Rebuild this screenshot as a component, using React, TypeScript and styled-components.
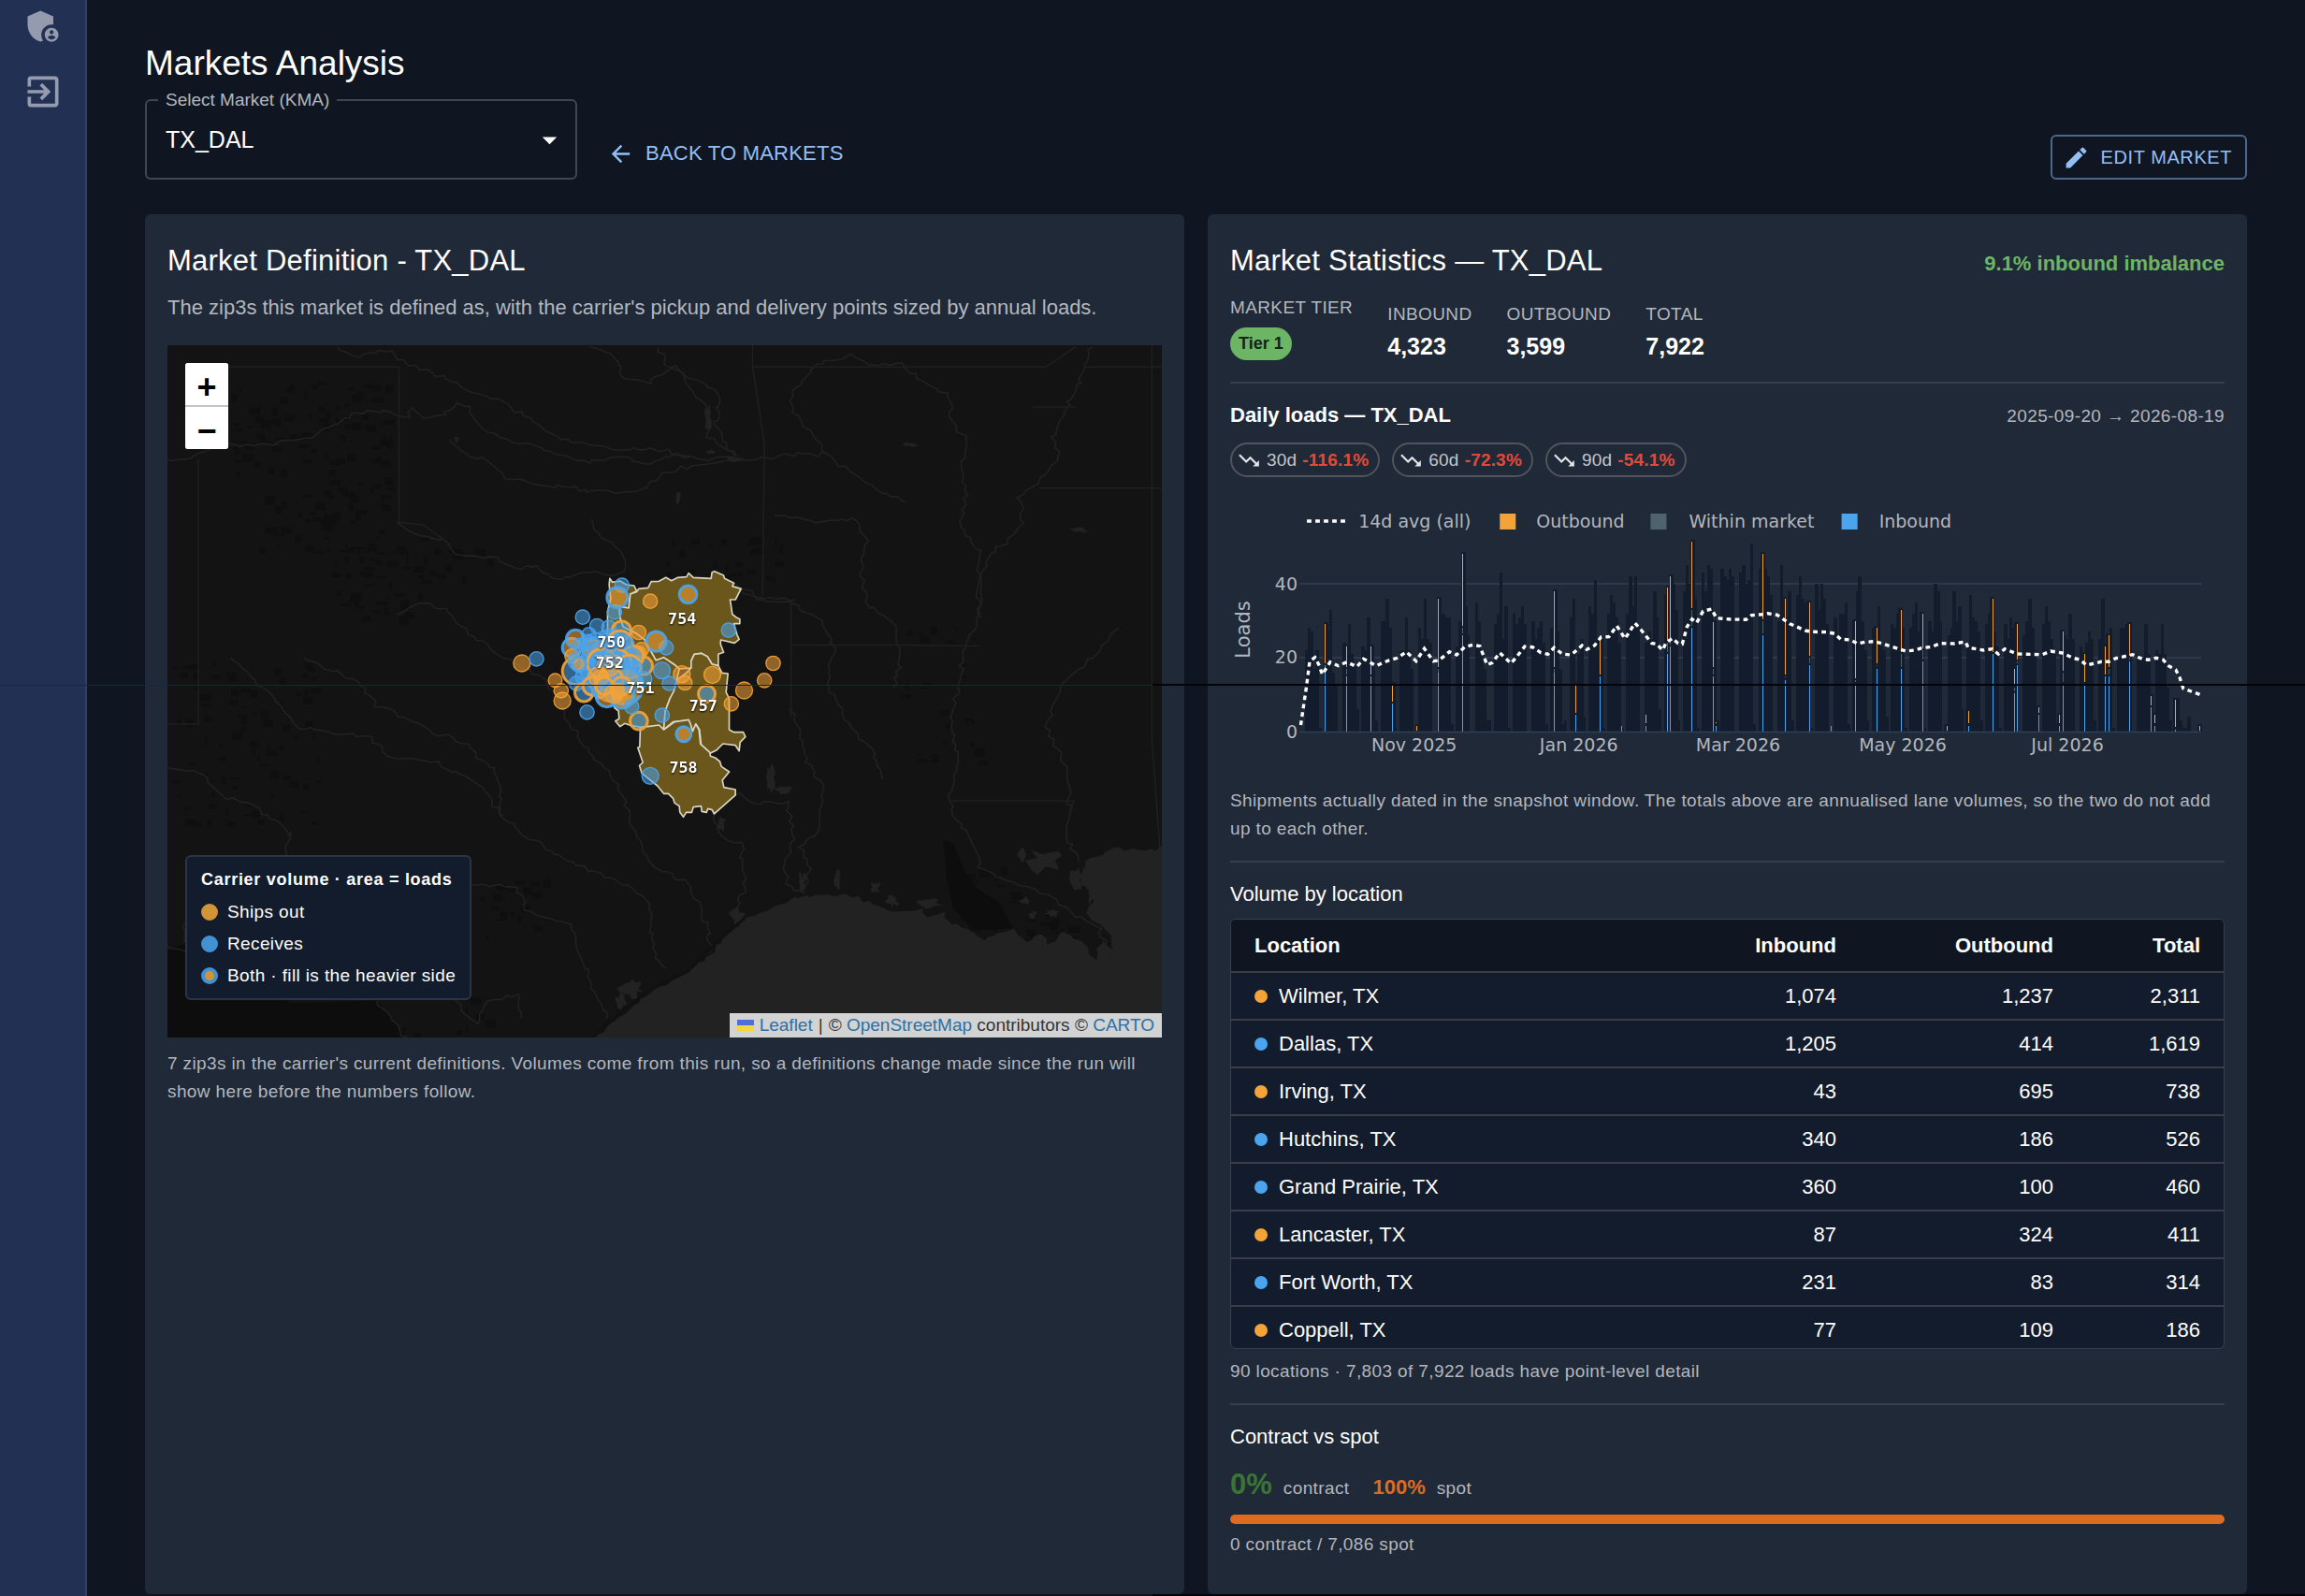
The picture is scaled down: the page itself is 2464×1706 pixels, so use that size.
import React from "react";
import styled, { createGlobalStyle, css } from "styled-components";
import {
  MdAdminPanelSettings,
  MdArrowBack,
  MdArrowDropDown,
  MdEdit,
  MdExitToApp,
  MdTrendingDown,
} from "react-icons/md";

const color = {
  page: "#0f1621",
  panel: "#1f2938",
  rail: "#223153",
  railEdge: "#33415f",
  tableHead: "#0f1621",
  tableBody: "#121c2d",
  text: "#ffffff",
  muted: "#b3b7be",
  line: "#35404f",
  rowLine: "#3b3e44",
  link: "#93bff5",
  orange: "#f4a338",
  blue: "#4aa4ee",
  slate: "#4f636f",
  green: "#6cb565",
  red: "#e04b39",
  contract: "#3a7535",
  spot: "#de6b20",
};

const GlobalStyle = createGlobalStyle`
  *, *::before, *::after { box-sizing: border-box; }
  body {
    margin: 0;
    background: ${color.page};
    color: ${color.text};
    font-family: "Liberation Sans", Helvetica, Arial, sans-serif;
    overflow: hidden;
  }
  h1, h2, h3, p { margin: 0; font-weight: 400; }
`;

/* ---------- type ---------- */

const captionType = css`
  font-size: 19px;
  line-height: 30px;
  letter-spacing: 0.02em;
`;

const Caption = styled.p<{ $gap?: number }>`
  ${captionType}
  color: ${color.muted};
  margin-top: ${(p) => p.$gap ?? 0}px;
`;

const PanelTitle = styled.h2`
  font-size: 31px;
  line-height: 49px;
  letter-spacing: 0.0075em;
`;

const SectionTitle = styled.h3<{ $bold?: boolean }>`
  font-size: 22px;
  line-height: 34px;
  font-weight: ${(p) => (p.$bold ? 700 : 400)};
`;

/* ---------- shell ---------- */

const Shell = styled.div`
  display: flex;
  height: 100vh;
  overflow: hidden;
`;

const Rail = styled.nav`
  flex: 0 0 93px;
  display: flex;
  flex-direction: column;
  align-items: center;
  gap: 26px;
  padding-top: 6px;
  background: ${color.rail};
  border-right: 2px solid ${color.railEdge};
`;

const RailButton = styled.button`
  display: flex;
  padding: 0;
  border: 0;
  background: none;
  color: #949bae;
  font-size: 44px;
`;

const Main = styled.main`
  flex: 1;
  min-width: 0;
  display: flex;
  flex-direction: column;
  padding: 44px 62px 2px;
`;

const PageTitle = styled.h1`
  font-size: 37px;
  line-height: 48px;
`;

const Toolbar = styled.div`
  display: flex;
  align-items: flex-end;
  gap: 24px;
`;

const Field = styled.fieldset`
  width: 462px;
  margin: 0;
  padding: 0;
  border: 2px solid #414751;
  border-radius: 6px;
`;

const FieldLegend = styled.legend`
  margin-left: 12px;
  padding: 0 8px;
  font-size: 19px;
  line-height: 30px;
  color: ${color.muted};
`;

const SelectWrap = styled.div`
  display: flex;
  align-items: center;
  height: 82px;
  margin-top: -14px;
`;

const MarketSelect = styled.select`
  appearance: none;
  flex: 1;
  height: 52px;
  padding: 0 20px;
  border: 0;
  background: none;
  color: ${color.text};
  font: inherit;
  font-size: 25px;
`;

const SelectArrow = styled(MdArrowDropDown)`
  flex: none;
  width: 37px;
  height: 37px;
  margin-left: -56px;
  margin-right: 9px;
  pointer-events: none;
`;

const TextButton = styled.button<{ $outlined?: boolean }>`
  display: flex;
  align-items: center;
  gap: 12px;
  height: ${(p) => (p.$outlined ? 48 : 56)}px;
  padding: ${(p) => (p.$outlined ? "0 14px 0 11px" : "0 8px")};
  margin-left: ${(p) => (p.$outlined ? "auto" : "0")};
  border: ${(p) => (p.$outlined ? "2px solid #49688e" : "0")};
  border-radius: 6px;
  background: none;
  color: ${color.link};
  font: inherit;
  font-size: ${(p) => (p.$outlined ? 20 : 22)}px;
  letter-spacing: ${(p) => (p.$outlined ? "0.02857em" : "0.01em")};
  text-transform: uppercase;

  svg {
    width: 29px;
    height: 29px;
  }
`;

const Panels = styled.div`
  flex: 1;
  min-height: 0;
  display: grid;
  grid-template-columns: minmax(0, 1fr) minmax(0, 1fr);
  gap: 25px;
  margin-top: 37px;
`;

const Panel = styled.section`
  padding: 25px 24px;
  background: ${color.panel};
  border-radius: 6px;
`;

/* ---------- map ---------- */

const Description = styled.p`
  margin-top: 10px;
  font-size: 22px;
  line-height: 31px;
  color: ${color.muted};
`;

const MapFrame = styled.div`
  position: relative;
  height: 740px;
  margin-top: 25px;
  overflow: hidden;
  background: #131313;
`;

const MapCanvas = styled.svg`
  display: block;
  width: 100%;
  height: 100%;
`;

const ZoomControl = styled.div`
  position: absolute;
  top: 19px;
  left: 19px;
  display: flex;
  flex-direction: column;
  gap: 2px;
  width: 46px;
  border-radius: 3px;
  overflow: hidden;
  background: #c4c4c4;
`;

const ZoomButton = styled.button`
  height: 45px;
  padding: 7px 0 0;
  border: 0;
  background: #ffffff;
  color: #000000;
  font-family: "Liberation Sans", Arial, sans-serif;
  font-size: 36px;
  font-weight: 700;
  line-height: 38px;
`;

const MapLegend = styled.div`
  position: absolute;
  left: 19px;
  bottom: 40px;
  padding: 6px 15px 7px;
  border: 2px solid #2b3546;
  border-radius: 6px;
  background: #121c2d;
  ${captionType}
`;

const LegendTitle = styled.div`
  font-size: 18px;
  letter-spacing: 0.04em;
  font-weight: 700;
  line-height: 36px;
`;

const LegendRow = styled.div`
  display: flex;
  align-items: center;
  gap: 10px;
  line-height: 34px;
`;

const LegendDot = styled.span<{ $fill: string; $ring?: string }>`
  width: 18px;
  height: 18px;
  border-radius: 50%;
  border: 4px solid ${(p) => p.$ring ?? p.$fill};
  background: ${(p) => p.$fill};
`;

const Attribution = styled.div`
  position: absolute;
  right: 0;
  bottom: 0;
  display: flex;
  align-items: center;
  gap: 6px;
  height: 26px;
  padding: 0 8px;
  background: #d3d3d3;
  color: #333333;
  font-size: 19px;
  line-height: 26px;
  white-space: nowrap;

  a {
    color: #2b71a6;
    text-decoration: none;
  }
`;

const Flag = styled.span`
  width: 18px;
  height: 12px;
  background: linear-gradient(#4c6fdc 50%, #f7d53c 50%);
`;

type Dot = [number, number, number, "o" | "b" | "ob" | "bo"];

const dots: Dot[] = [
  [115, 447, 28, "o"], [162, 433, 24, "b"], [222, 502, 23, "o"], [241, 535, 24, "o"],
  [245, 567, 28, "o"], [324, 604, 24, "b"], [310, 299, 24, "b"], [921, 447, 24, "o"],
  [893, 502, 24, "o"], [828, 534, 28, "o"], [787, 577, 24, "o"], [726, 484, 28, "o"],
  [628, 482, 28, "o"], [638, 510, 24, "o"], [708, 545, 30, "bo"], [564, 470, 28, "b"],
  [588, 512, 24, "b"], [565, 614, 24, "b"], [490, 632, 31, "bo"], [634, 674, 27, "ob"],
  [527, 808, 28, "b"], [778, 341, 24, "b"], [648, 226, 31, "ob"], [527, 248, 24, "o"],
  [436, 197, 24, "b"], [412, 283, 24, "b"], [421, 236, 36, "ob"], [578, 397, 24, "b"],
  [546, 377, 35, "ob"], [490, 348, 24, "o"], [356, 327, 24, "b"], [394, 332, 24, "b"],
  [435, 342, 33, "bo"], [330, 355, 24, "b"], [275, 397, 33, "ob"], [287, 369, 32, "ob"],
  [350, 385, 36, "b"], [395, 395, 48, "b"], [395, 378, 40, "b"], [340, 430, 36, "b"],
  [345, 400, 38, "ob"], [430, 382, 42, "bo"], [445, 390, 32, "b"], [499, 403, 24, "o"],
  [288, 472, 46, "bo"], [276, 424, 24, "o"], [302, 390, 24, "b"], [325, 378, 24, "b"],
  [345, 470, 44, "b"], [370, 420, 46, "b"], [505, 455, 32, "bo"], [490, 415, 24, "o"],
  [472, 425, 36, "bo"], [508, 497, 25, "b"], [430, 430, 54, "b"], [420, 450, 50, "bo"],
  [372, 448, 50, "bo"], [460, 458, 40, "bo"], [478, 462, 24, "b"], [312, 490, 26, "b"],
  [290, 512, 24, "b"], [314, 541, 32, "bo"], [340, 520, 32, "bo"], [365, 535, 26, "ob"],
  [400, 520, 52, "o"], [445, 520, 62, "ob"], [450, 500, 46, "b"], [388, 552, 38, "ob"],
  [436, 552, 42, "ob"], [400, 500, 42, "bo"], [360, 490, 32, "o"], [369, 492, 26, "o"],
  [380, 520, 30, "bo"], [435, 520, 32, "bo"], [410, 545, 30, "o"], [421, 534, 24, "o"],
  [395, 455, 34, "o"], [400, 430, 34, "b"], [290, 440, 28, "b"], [298, 450, 26, "ob"],
  [467, 586, 24, "b"],
];

const zipLabels: [string, number, number][] = [
  ["754", 629, 320], ["750", 402, 395], ["752", 397, 462],
  ["751", 495, 542], ["757", 697, 599], ["758", 633, 797],
];

const zipShapes = [
  "M397,175 405,187 430,183 450,195 475,198 483,215 463,225 458,270 428,265 430,300 440,330 520,345 508,370 545,437 570,428 603,450 620,465 612,500 610,530 590,560 575,600 570,655 520,650 495,652 460,645 445,640 430,650 415,632 427,625 425,600 412,590 390,420 390,280 400,240 395,195Z",
  "M463,225 458,270 428,265 430,300 440,330 480,350 508,370 545,437 570,428 603,450 620,465 658,462 658,440 668,418 690,415 710,425 725,450 745,455 745,418 762,412 752,385 753,372 797,382 812,370 805,355 795,320 814,320 814,305 803,300 790,290 783,243 800,243 818,208 790,200 795,190 765,175 762,165 733,152 725,155 722,175 665,172 650,158 643,170 615,172 595,182 577,172 555,184 530,185 520,205 490,208 483,218Z",
  "M658,462 658,440 668,418 690,415 710,425 725,450 745,455 757,478 776,480 770,540 780,560 780,660 795,668 825,668 832,683 815,700 812,728 800,710 760,705 740,725 720,735 690,708 685,660 673,642 663,665 650,630 600,635 570,660 575,600 590,560 603,535 612,500 640,480Z",
  "M495,652 493,715 487,718 503,765 492,775 500,800 550,840 570,865 585,865 600,880 605,895 620,905 622,925 633,940 642,925 660,925 665,908 690,905 692,922 707,925 712,913 725,917 732,930 800,870 800,852 763,845 758,822 780,795 755,778 750,762 735,750 720,745 718,733 688,706 683,660 673,642 663,665 655,640 650,628 605,635 570,660 555,645 520,650Z",
];

const rivers = [
  "M13,245 50,240 100,215 160,215 230,200 300,150 350,150 375,165 380,140 400,160 430,160 450,135 470,140 485,175 510,200 560,215 600,235 640,250 700,240 740,255 780,235 830,245 870,240 900,245 950,235 1010,235 1050,275 1090,310 1130,330",
  "M270,20 300,40 350,25 370,50 430,80 470,110 520,130 560,165 600,200 650,215 700,225 760,225 800,240",
  "M440,205 470,240 500,245 520,280 570,295 620,300 650,310 700,310 740,300 760,270 800,260 850,245",
  "M360,370 390,395 430,405 455,440 510,440 540,465 570,455 600,485 640,470 690,475 705,465 700,430 670,400 650,360",
  "M360,555 400,530 430,545 470,590 520,640 560,665 590,690 610,750 650,830 680,870 700,910 715,980 750,1060 800,1090 830,1180 835,1230",
  "M220,640 300,690 330,735 400,780 460,810 510,870 520,960 560,1000 600,1030 640,1060 700,1090 740,1130 750,1230 765,1260",
  "M110,640 180,730 210,780 320,800 350,840 420,850 490,900 520,960",
  "M470,1090 540,1100 560,1150 620,1170 640,1250 670,1340 680,1360",
  "M13,1215 50,1230 35,1180 60,1120 100,1080 180,1060 195,1020 200,990",
  "M13,860 60,870 100,920 140,930 190,980 200,1000",
  "M650,20 690,40 700,80 740,90 780,60 830,150 830,200 870,240",
  "M755,20 770,60 820,90 850,120 840,180 870,240",
  "M1010,235 960,150 955,110 1000,50 1050,35 1080,60 1120,50 1150,90 1190,110 1200,180 1220,200 1215,260 1220,330 1210,370 1240,430 1235,500 1240,560",
  "M1410,20 1390,90 1370,150 1350,200 1360,240 1330,290 1300,320 1305,370 1280,410 1250,440 1240,500 1240,560 1215,620 1210,690 1195,760 1210,850 1195,900 1200,960 1230,1000 1240,1060 1290,1090 1340,1110 1380,1150 1420,1180 1440,1230",
  "M1450,580 1410,640 1360,700 1340,780 1370,860 1375,930 1370,1000 1390,1050",
  "M930,355 1000,370 1050,365 1070,400 1060,450 1070,530 1110,570 1120,650 1110,700",
  "M880,500 920,530 960,530 970,545 1000,560 1020,620 1010,690 1040,770 1080,830 1090,880",
  "M955,740 970,800 980,850 1005,900 1000,980 970,1020 985,1060 970,1110",
  "M865,905 900,930 950,930 960,1000 945,1050 950,1090 975,1110",
  "M440,1300 460,1350 480,1370 500,1330 540,1310 550,1360",
  "M780,500 850,480 900,520 960,525",
  "M840,950 850,1000 880,1010 885,1100 870,1150",
  "M330,1325 345,1350 360,1370 375,1399",
];

const borders = [
  "M105,60H363V370L400,375 430,405",
  "M897,17V60H1340L1385,20",
  "M897,60 915,215 912,520",
  "M955,530V760M955,615H1120L1240,617",
  "M1195,926H1382L1375,960",
  "M60,245V773H13",
  "M1330,302H1516M1320,140H1385M1400,60H1516",
  "M1500,17V800L1512,1020",
];

const coast =
  "M655,1399 690,1365 730,1320 800,1265 835,1230 860,1185 905,1150 960,1120 1010,1113 1050,1117 1080,1132 1110,1146 1150,1140 1165,1160 1185,1150 1200,1170 1230,1185 1245,1205 1265,1190 1290,1185 1310,1205 1330,1190 1345,1210 1370,1185 1395,1205 1415,1240 1425,1205 1445,1225 1440,1190 1420,1170 1400,1150 1415,1120 1395,1090 1400,1045 1430,1025 1470,1020 1490,1028 1516,1018";

const lakes = [
  [830, 160, 6, 26], [870, 245, 18, 7], [835, 230, 8, 5], [925, 880, 8, 30], [945, 905, 16, 8],
  [850, 970, 7, 18], [1340, 1045, 28, 26], [1305, 1035, 9, 14], [1025, 1085, 8, 22],
  [1083, 1098, 8, 13], [1108, 1125, 10, 14], [1165, 1130, 20, 12], [972, 1090, 6, 22],
  [875, 1160, 14, 24], [715, 1300, 20, 20], [700, 1325, 10, 18], [1385, 1085, 12, 28],
  [1410, 1110, 10, 24], [1310, 1125, 9, 7], [1350, 1150, 12, 7], [1320, 1155, 7, 10],
  [785, 320, 6, 12], [450, 205, 4, 8], [1135, 215, 14, 5], [1390, 385, 14, 5],
];

/* Small seeded generator so the terrain stays the same on each render. */
function seeded(seed: number) {
  let s = seed;
  return () => {
    s = (s * 16807) % 2147483647;
    return s / 2147483647;
  };
}

const patchAreas: [number, number, number, number, number][] = [
  [110, 90, 240, 180, 90], [150, 280, 200, 150, 60], [260, 400, 140, 160, 50], [20, 640, 220, 330, 90],
  [740, 400, 200, 90, 26], [380, 420, 120, 60, 14], [480, 1080, 110, 120, 24], [1120, 500, 120, 380, 26],
  [350, 1290, 160, 100, 10], [1200, 1050, 90, 120, 20], [1260, 1150, 120, 60, 16],
];

const patches = (() => {
  const rnd = seeded(77);
  return patchAreas.flatMap(([x, y, w, h, n]) =>
    Array.from({ length: n }, () => ({
      x: x + rnd() * w,
      y: y + rnd() * h,
      w: 3 + rnd() * 14,
      h: 3 + rnd() * 13,
    }))
  );
})();

/* Turns a coarse polyline into a wandering one, as rivers are drawn. */
function wander(path: string, seed: number, swing = 8) {
  const rnd = seeded(seed);
  const pts = path.slice(1).split(" ").map((p) => p.split(",").map(Number));
  let d = `M${pts[0][0]},${pts[0][1]}`;
  for (let i = 1; i < pts.length; i++) {
    const [ax, ay] = pts[i - 1];
    const [bx, by] = pts[i];
    const n = Math.max(1, Math.round(Math.hypot(bx - ax, by - ay) / 9));
    for (let k = 1; k <= n; k++) {
      const x = ax + ((bx - ax) * k) / n + (rnd() - 0.5) * swing;
      const y = ay + ((by - ay) * k) / n + (rnd() - 0.5) * swing;
      d += `L${x.toFixed(1)},${y.toFixed(1)}`;
    }
  }
  return d;
}

/* A lake with a ragged shore. */
function shore([cx, cy, rx, ry]: number[], seed: number) {
  const rnd = seeded(seed);
  const pts = Array.from({ length: 16 }, (_, i) => {
    const a = (i / 16) * Math.PI * 2;
    const k = 0.45 + rnd() * 0.75;
    return `${(cx + Math.cos(a) * rx * k).toFixed(1)},${(cy + Math.sin(a) * ry * k).toFixed(1)}`;
  });
  return `M${pts.join(" ")}Z`;
}

function MarketMap() {
  return (
    <MapCanvas viewBox="0 0 1064 740" preserveAspectRatio="xMidYMid slice" role="img" aria-label="Map of the zip3s in TX_DAL">
      <g transform="matrix(.7079 0 0 .5357 -9 -9)">
        <path d="M13,1225 60,1200 200,1330 330,1325 375,1399H13Z" fill="#0d0d0d" />
        {patches.map((p, i) => (
          <rect key={i} x={p.x} y={p.y} width={p.w} height={p.h} fill="#0f0f0f" />
        ))}
        <path d="M1185,1005 1200,1010 1215,1060 1235,1100 1270,1130 1290,1180 1230,1185 1200,1140 1190,1080Z" fill="#0d0d0d" />
        <path d={`${wander(coast, 311, 9)}V1399Z`} fill="#222222" />
        {lakes.map((lake, i) => (
          <path key={i} d={shore(lake, 401 + i * 7)} fill="#222222" />
        ))}
        <g fill="none" stroke="#222222" strokeWidth="1.5">
          {rivers.map((d, i) => (
            <path key={i} d={wander(d, 91 + i * 13)} vectorEffect="non-scaling-stroke" />
          ))}
        </g>
        <g fill="none" stroke="#1f1f1f" strokeWidth="1.5">
          {borders.map((d, i) => (
            <path key={i} d={d} vectorEffect="non-scaling-stroke" />
          ))}
        </g>
        <path d="M655,1399 690,1358 740,1305 800,1265 850,1200 885,1160" fill="none" stroke="#111111" strokeWidth="3" vectorEffect="non-scaling-stroke" />
      </g>
      <g transform="translate(341 191) scale(.33333)">
        {zipShapes.map((d, i) => (
          <path key={i} d={d} fill="#6b561b" stroke="#d9d5c2" strokeWidth="5" strokeLinejoin="round" />
        ))}
        {dots.map(([x, y, r, kind], i) => {
          const fill = kind[0] === "o" ? color.orange : color.blue;
          const ring = kind.length === 1 ? fill : kind[1] === "o" ? color.orange : color.blue;
          return (
            <circle
              key={i}
              cx={x}
              cy={y}
              r={r - (kind.length === 1 ? 1 : 3)}
              fill={fill}
              fillOpacity={0.56}
              stroke={ring}
              strokeOpacity={0.92}
              strokeWidth={kind.length === 1 ? 4 : 9}
            />
          );
        })}
        <g
          fontFamily='"DejaVu Sans Mono", monospace'
          fontWeight="700"
          fontSize="50"
          textAnchor="middle"
          style={{ filter: "drop-shadow(0 3px 3px #000)" }}
        >
          <text x="390" y="456" fill="#c4c4c4" opacity="0.6">753</text>
          {zipLabels.map(([zip, x, y]) => (
            <text key={zip} x={x} y={y} fill="#ffffff">{zip}</text>
          ))}
        </g>
      </g>
    </MapCanvas>
  );
}

/* ---------- statistics ---------- */

const SpreadRow = styled.div`
  display: flex;
  align-items: baseline;
  justify-content: space-between;
`;

const Imbalance = styled.strong`
  color: ${color.green};
  font-size: 22px;
`;

const Stats = styled.div`
  display: flex;
  align-items: flex-end;
  gap: 37px;
  margin-top: 11px;
`;

const Stat = styled.div`
  display: flex;
  flex-direction: column;
  align-items: flex-start;
`;

const StatLabel = styled.span`
  ${captionType}
  text-transform: uppercase;
  color: ${color.muted};
`;

const StatValue = styled.strong`
  font-size: 25px;
  line-height: 38px;
`;

const TierChip = styled.span`
  height: 35px;
  margin: 6px 0 4px;
  padding: 0 9px;
  border-radius: 18px;
  background: ${color.green};
  color: #15241a;
  font-size: 18px;
  font-weight: 700;
  line-height: 35px;
`;

const Divider = styled.hr`
  height: 2px;
  margin: 19px 0 17px;
  border: 0;
  background: ${color.line};
`;

const TrendRow = styled.div`
  display: flex;
  gap: 13px;
  margin-top: 12px;
`;

const TrendChip = styled.span`
  display: flex;
  align-items: center;
  gap: 6px;
  height: 37px;
  padding: 0 10px 0 5px;
  border: 2px solid #515459;
  border-radius: 19px;
  color: #c3c6cb;
  font-size: 19px;
  letter-spacing: 0.01em;

  svg {
    width: 26px;
    height: 26px;
    color: #e3e5e8;
  }

  strong {
    color: ${color.red};
  }
`;

const ChartCanvas = styled.svg`
  display: block;
  width: 100%;
  height: 308px;
  margin: 11px 0 12px;
`;

const PITCH = 2.883;
const PLOT_X = 74;
const ZERO_Y = 261;
const UNIT = 3.95;

/* Monday to Friday totals, one row for each week of the window. */
const weeks: number[][] = [
  [22, 28, 27, 17, 22], [29, 27, 33, 16, 13], [24, 22, 29, 21, 18], [23, 22, 31, 23, 17],
  [30, 30, 36, 28, 13], [22, 22, 31, 22, 17], [28, 25, 36, 25, 24], [36, 32, 32, 31, 31],
  [23, 30, 48, 34, 26], [35, 30, 22, 17, 3], [29, 32, 43, 25, 34], [32, 29, 31, 34, 29],
  [30, 25, 28, 30, 24], [28, 38, 27, 17, 2], [31, 36, 13, 21, 25], [34, 32, 41, 25, 24],
  [32, 37, 35, 31, 24], [32, 42, 34, 42, 28], [24, 27, 25, 38, 31], [37, 39, 42, 40, 33],
  [38, 45, 40, 51, 36], [43, 38, 45, 44, 29], [44, 42, 41, 44, 42], [43, 45, 40, 41, 51],
  [44, 48, 44, 42, 37], [30, 45, 36, 31, 38], [37, 42, 36, 35, 35], [40, 33, 40, 36, 29],
  [31, 26, 32, 32, 35], [30, 38, 42, 30, 22], [28, 28, 34, 23, 22], [29, 28, 32, 33, 28],
  [28, 32, 35, 27, 32], [30, 27, 40, 38, 30], [26, 28, 38, 30, 34], [23, 37, 31, 30, 27],
  [29, 32, 36, 27, 23], [29, 25, 31, 28, 29], [26, 30, 36, 28, 22], [29, 34, 30, 25, 21],
  [27, 26, 25, 32, 25], [23, 20, 24, 27, 25], [25, 36, 23, 26, 28], [20, 28, 28, 29, 27],
  [21, 20, 20, 29, 21], [22, 21, 29, 21, 12], [5, 9, 3, 1, 1],
];

const weekend = [1, 0, 6, 3, 1, 0, 0, 2, 0, 3, 1, 0, 2, 3, 4, 1];

/* x, then [bottom, top] of outbound and of within market, then inbound. */
type Spike = [number, [number, number]?, [number, number]?, number?];
const spikes: Spike[] = [
  [333, [18.5, 29], undefined, 18], [393, [17.5, 23], [15.5, 17], 15], [461, [15.5, 23], undefined, 15],
  [521, [8, 13], undefined, 7.6], [589, [0.3, 1.6]], [649, [17.5, 36], [16, 17], 16],
  [717, [28.5, 48], [26.5, 28], 26], [973, [17.5, 38], [16, 17], 16], [1033, [5, 13], undefined, 4.6],
  [1101, [15.5, 25.5], undefined, 15], [1161, undefined, undefined, 1.6], [1229, [2.4, 4.6], undefined, 1.6],
  [1289, [24.5, 39], [21.5, 24], 21], [1297, [24.5, 42], [23.5, 24.4], 23], [1357, [33.5, 51.4], [28.5, 33], 28],
  [1417, [17.5, 29.5], [15.5, 17], 15], [1425, [2.2, 2.6], undefined, 1.6], [1553, [30.5, 48], [26.5, 30], 26],
  [1614, [15.5, 36], [14.6, 15], 14], [1682, [20.5, 35], [18.5, 20], 18], [1742, undefined, undefined, 1.6],
  [1810, [14.5, 30], [13.5, 14], 12.6], [1870, [18.5, 28], [17.6, 18], 17], [1938, [21.5, 33], [17.5, 21], 17],
  [1998, [22.5, 32], [19.5, 22], 19], [2066, [0.3, 1.6]], [2126, [2.4, 5.6], undefined, 1.6],
  [2194, [21.5, 36], undefined, 21], [2254, [13, 17], [11, 12], 10.5], [2262, [19.5, 29], [18.5, 19], 18],
  [2322, [5, 6.6], undefined, 4.6], [2382, [2.4, 4.6], undefined, 1.6], [2390, [16.5, 27], [13.5, 16], 12.6],
  [2450, [13.5, 21], undefined, 12.6], [2510, [15.5, 23], undefined, 15], [2518, [17.5, 26], [15.5, 17], 15],
  [2578, [20.5, 29], [19.4, 20], 19], [2638, [7, 9.5], undefined, 6.6], [2646, [2.4, 4.6], undefined, 1.6],
  [2706, [1.3, 8.5], undefined, 0.6], [2774, [0.3, 1.6]],
];

const average: [number, number][] = [
  [265, 765], [272, 710], [280, 650], [290, 560], [305, 548], [317, 575], [325, 603], [347, 563], [370, 575],
  [393, 563], [422, 578], [440, 553], [455, 562], [475, 575], [510, 558], [535, 550], [560, 530], [587, 560],
  [610, 520], [635, 560], [650, 558], [680, 530], [700, 540], [722, 515], [745, 508], [765, 512], [785, 572],
  [800, 565], [820, 533], [852, 567], [865, 550], [890, 513], [912, 515], [935, 533], [955, 538], [972, 517],
  [995, 537], [1020, 540], [1050, 510], [1063, 523], [1085, 510], [1103, 483], [1125, 482], [1147, 447],
  [1170, 488], [1198, 438], [1215, 460], [1245, 503], [1258, 505], [1275, 525], [1285, 500], [1303, 487],
  [1318, 503], [1330, 505], [1343, 450], [1357, 425], [1370, 437], [1388, 400], [1412, 393], [1425, 422],
  [1465, 426], [1508, 427], [1523, 413], [1553, 410], [1568, 407], [1595, 412], [1630, 440], [1675, 463],
  [1695, 466], [1735, 467], [1755, 472], [1772, 490], [1800, 492], [1818, 504], [1840, 499], [1868, 497],
  [1910, 512], [1938, 522], [1953, 528], [1980, 525], [1998, 518], [2027, 514], [2050, 503], [2090, 504],
  [2120, 498], [2128, 517], [2170, 525], [2194, 521], [2212, 537], [2230, 521], [2265, 537], [2335, 539],
  [2358, 528], [2390, 534], [2420, 550], [2440, 556], [2458, 573], [2500, 562], [2520, 562], [2540, 551],
  [2587, 539], [2607, 550], [2630, 556], [2652, 550], [2672, 556], [2687, 575], [2707, 588], [2718, 613],
  [2728, 648], [2750, 657], [2774, 667],
];

const sx = (v: number) => v / 2.6133 - 26;
const level = (loads: number) => ZERO_Y - loads * UNIT;

const months: [string, number][] = [
  ["Nov 2025", 42], ["Jan 2026", 103], ["Mar 2026", 162], ["May 2026", 223], ["Jul 2026", 284],
];

function LoadsChart() {
  const bars: { x: number; h: number }[] = [];
  weeks.forEach((week, w) => {
    week.forEach((h, i) => bars.push({ x: w * 7 + 2 + i, h }));
    bars.push({ x: w * 7 + 7, h: weekend[w % weekend.length] });
  });
  return (
    <ChartCanvas viewBox="0 0 1062 308" preserveAspectRatio="none" role="img" aria-label="Daily loads for TX_DAL">
      <g stroke="#344051" strokeWidth="1.5">
        <path d={`M74 ${level(20)}H1037M74 ${level(40)}H1037`} />
      </g>
      <g fill={color.tableBody} shapeRendering="crispEdges">
        {bars.map((b) => (
          <rect key={b.x} x={PLOT_X + b.x * PITCH} y={level(b.h)} width={3.4} height={b.h * UNIT} />
        ))}
        {spikes.map(([x, out]) => out && <rect key={x} x={sx(x) - 2} y={level(out[1]) - 2} width="5" height={out[1] * UNIT + 2} />)}
      </g>
      <g shapeRendering="crispEdges">
        {spikes.map(([x, out, within, inbound]) => (
          <React.Fragment key={x}>
            {out && <rect x={Math.round(sx(x))} y={level(out[1])} width="1" height={(out[1] - out[0]) * UNIT} fill={color.orange} />}
            {within && <rect x={Math.round(sx(x))} y={level(within[1])} width="1" height={(within[1] - within[0]) * UNIT} fill={color.slate} />}
            {inbound && <rect x={Math.round(sx(x))} y={level(inbound)} width="1" height={inbound * UNIT} fill={color.blue} />}
          </React.Fragment>
        ))}
      </g>
      <path d={`M74 ${ZERO_Y + 0.5}H1037`} stroke="#2d4257" strokeWidth="1.5" />
      <polyline
        points={average.map(([x, y]) => `${sx(x).toFixed(1)},${(y / 3 - 1).toFixed(1)}`).join(" ")}
        fill="none"
        stroke="#ffffff"
        strokeWidth="3.4"
        strokeDasharray="4.8 4.2"
      />
      <g fill={color.muted} fontFamily='Verdana, "DejaVu Sans", sans-serif' fontSize="19">
        <path d="M82 36H124" stroke="#ffffff" strokeWidth="3.4" strokeDasharray="4.8 4.2" />
        <text x="137" y="43">14d avg (all)</text>
        <rect x="288" y="28" width="17" height="17" fill={color.orange} />
        <text x="327" y="43">Outbound</text>
        <rect x="449" y="28" width="17" height="17" fill={color.slate} />
        <text x="490" y="43">Within market</text>
        <rect x="653" y="28" width="17" height="17" fill={color.blue} />
        <text x="693" y="43">Inbound</text>
        <g textAnchor="end">
          <text x="72" y="110">40</text>
          <text x="72" y="188">20</text>
          <text x="72" y="268">0</text>
        </g>
        <g textAnchor="middle">
          {months.map(([name, day]) => (
            <text key={name} x={PLOT_X + (day + 0.5) * PITCH} y="282">{name}</text>
          ))}
          <text transform="translate(21 152) rotate(-90)" fontSize="21">Loads</text>
        </g>
      </g>
    </ChartCanvas>
  );
}

/* ---------- location table ---------- */

const TableFrame = styled.div`
  height: 460px;
  margin-top: 9px;
  overflow: hidden;
  border: 1px solid ${color.line};
  border-radius: 6px;
  background: ${color.tableBody};
`;

const Table = styled.table`
  width: 100%;
  table-layout: fixed;
  border-collapse: separate;
  border-spacing: 0;
  font-size: 22px;
`;

const HeadCell = styled.th<{ $end?: boolean; $width?: number }>`
  width: ${(p) => (p.$width ? `${p.$width}px` : "auto")};
  height: 57px;
  padding: 0 25px;
  background: ${color.tableHead};
  border-bottom: 2px solid ${color.rowLine};
  text-align: ${(p) => (p.$end ? "right" : "left")};
  font-weight: 700;
`;

const Cell = styled.td<{ $end?: boolean }>`
  height: 51px;
  padding: 0 25px;
  border-bottom: 2px solid ${color.rowLine};
  text-align: ${(p) => (p.$end ? "right" : "left")};
`;

const Place = styled.span`
  display: flex;
  align-items: center;
  gap: 12px;
`;

const PlaceDot = styled.span<{ $outbound: boolean }>`
  width: 14px;
  height: 14px;
  border-radius: 50%;
  background: ${(p) => (p.$outbound ? color.orange : color.blue)};
`;

const locations: [string, number, number, number][] = [
  ["Wilmer, TX", 1074, 1237, 2311],
  ["Dallas, TX", 1205, 414, 1619],
  ["Irving, TX", 43, 695, 738],
  ["Hutchins, TX", 340, 186, 526],
  ["Grand Prairie, TX", 360, 100, 460],
  ["Lancaster, TX", 87, 324, 411],
  ["Fort Worth, TX", 231, 83, 314],
  ["Coppell, TX", 77, 109, 186],
];

const Shares = styled.div`
  display: flex;
  align-items: baseline;
  gap: 12px;
  height: 49px;
  margin-top: 9px;
  line-height: 49px;
`;

const Share = styled.strong<{ $tone: string; $large?: boolean }>`
  color: ${(p) => p.$tone};
  font-size: ${(p) => (p.$large ? 31 : 22)}px;
`;

const ShareLabel = styled.span`
  ${captionType}
  color: ${color.muted};
  margin-right: 13px;
`;

const ShareBar = styled.div`
  height: 10px;
  margin-top: 8px;
  border-radius: 5px;
  background: ${color.spot};
`;

/* Tile joins that run across the window above everything else. */
const Join = styled.div<{ $top: string; $from: string; $to: string; $thick: number; $tone: string }>`
  position: fixed;
  top: ${(p) => p.$top};
  left: ${(p) => p.$from};
  right: ${(p) => p.$to};
  height: ${(p) => p.$thick}px;
  background: ${(p) => p.$tone};
  pointer-events: none;
`;

const number = new Intl.NumberFormat("en-US");

export default function App() {
  return (
    <Shell>
      <GlobalStyle />
      <Rail aria-label="Main">
        <RailButton aria-label="Administration"><MdAdminPanelSettings /></RailButton>
        <RailButton aria-label="Sign out"><MdExitToApp /></RailButton>
      </Rail>
      <Main>
        <PageTitle>Markets Analysis</PageTitle>
        <Toolbar>
          <Field>
            <FieldLegend><label htmlFor="market">Select Market (KMA)</label></FieldLegend>
            <SelectWrap>
              <MarketSelect id="market" defaultValue="TX_DAL">
                <option>TX_DAL</option>
              </MarketSelect>
              <SelectArrow />
            </SelectWrap>
          </Field>
          <TextButton><MdArrowBack />Back to markets</TextButton>
          <TextButton $outlined><MdEdit />Edit market</TextButton>
        </Toolbar>
        <Panels>
          <Panel>
            <PanelTitle>Market Definition - TX_DAL</PanelTitle>
            <Description>
              The zip3s this market is defined as, with the carrier's pickup and delivery points sized by annual loads.
            </Description>
            <MapFrame>
              <MarketMap />
              <ZoomControl>
                <ZoomButton aria-label="Zoom in">+</ZoomButton>
                <ZoomButton aria-label="Zoom out">−</ZoomButton>
              </ZoomControl>
              <MapLegend>
                <LegendTitle>Carrier volume · area = loads</LegendTitle>
                <LegendRow><LegendDot $fill="#d29434" />Ships out</LegendRow>
                <LegendRow><LegendDot $fill="#4292d3" />Receives</LegendRow>
                <LegendRow><LegendDot $fill="#d29434" $ring="#4292d3" />Both · fill is the heavier side</LegendRow>
              </MapLegend>
              <Attribution>
                <Flag />
                <a href="#leaflet">Leaflet</a>
                <span>|</span>
                <span>© <a href="#osm">OpenStreetMap</a> contributors © <a href="#carto">CARTO</a></span>
              </Attribution>
            </MapFrame>
            <Caption $gap={13}>
              7 zip3s in the carrier's current definitions. Volumes come from this run, so a definitions change made since the run will show here before the numbers follow.
            </Caption>
          </Panel>
          <Panel>
            <SpreadRow>
              <PanelTitle>Market Statistics — TX_DAL</PanelTitle>
              <Imbalance>9.1% inbound imbalance</Imbalance>
            </SpreadRow>
            <Stats>
              <Stat>
                <StatLabel>Market tier</StatLabel>
                <TierChip>Tier 1</TierChip>
              </Stat>
              <Stat><StatLabel>Inbound</StatLabel><StatValue>4,323</StatValue></Stat>
              <Stat><StatLabel>Outbound</StatLabel><StatValue>3,599</StatValue></Stat>
              <Stat><StatLabel>Total</StatLabel><StatValue>7,922</StatValue></Stat>
            </Stats>
            <Divider />
            <SpreadRow>
              <SectionTitle $bold>Daily loads — TX_DAL</SectionTitle>
              <Caption>2025-09-20 → 2026-08-19</Caption>
            </SpreadRow>
            <TrendRow>
              <TrendChip><MdTrendingDown />30d <strong>-116.1%</strong></TrendChip>
              <TrendChip><MdTrendingDown />60d <strong>-72.3%</strong></TrendChip>
              <TrendChip><MdTrendingDown />90d <strong>-54.1%</strong></TrendChip>
            </TrendRow>
            <LoadsChart />
            <Caption>
              Shipments actually dated in the snapshot window. The totals above are annualised lane volumes, so the two do not add up to each other.
            </Caption>
            <Divider />
            <SectionTitle>Volume by location</SectionTitle>
            <TableFrame>
              <Table>
                <thead>
                  <tr>
                    <HeadCell scope="col">Location</HeadCell>
                    <HeadCell scope="col" $end $width={204}>Inbound</HeadCell>
                    <HeadCell scope="col" $end $width={232}>Outbound</HeadCell>
                    <HeadCell scope="col" $end $width={157}>Total</HeadCell>
                  </tr>
                </thead>
                <tbody>
                  {locations.map(([name, inbound, outbound, total]) => (
                    <tr key={name}>
                      <Cell><Place><PlaceDot $outbound={outbound > inbound} />{name}</Place></Cell>
                      <Cell $end>{number.format(inbound)}</Cell>
                      <Cell $end>{number.format(outbound)}</Cell>
                      <Cell $end>{number.format(total)}</Cell>
                    </tr>
                  ))}
                </tbody>
              </Table>
            </TableFrame>
            <Caption $gap={9}>90 locations · 7,803 of 7,922 loads have point-level detail</Caption>
            <Divider />
            <SectionTitle>Contract vs spot</SectionTitle>
            <Shares>
              <Share $tone={color.contract} $large>0%</Share>
              <ShareLabel>contract</ShareLabel>
              <Share $tone={color.spot}>100%</Share>
              <ShareLabel>spot</ShareLabel>
            </Shares>
            <ShareBar />
            <Caption $gap={7}>0 contract / 7,086 spot</Caption>
          </Panel>
        </Panels>
      </Main>
      <Join $top="732px" $from="0" $to="50%" $thick={1} $tone="#16263b" />
      <Join $top="731px" $from="50%" $to="0" $thick={2} $tone="#020407" />
      <Join $top="calc(100vh - 2px)" $from="50%" $to="0" $thick={2} $tone="#020407" />
    </Shell>
  );
}
